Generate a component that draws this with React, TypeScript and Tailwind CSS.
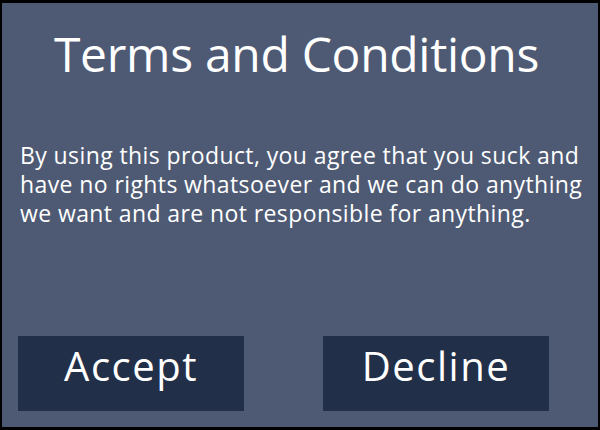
export default function App() {
  return (
    <div
      className="w-[600px] h-[430px] bg-[#4e5a73] border-t-[3px] border-b-[3px] border-x-2 border-black flex flex-col text-white"
      style={{ fontFamily: '"Open Sans", "Noto Sans", sans-serif' }}
    >
      <h1 className="pt-[26px] pr-[7px] text-center text-[48px] leading-[50px] tracking-[-0.3px] font-normal">
        Terms and Conditions
      </h1>
      <p className="mt-[62px] pl-[18px] pr-[4px] text-[23px] leading-[29px] tracking-[0.4px]">
        By using this product, you agree that you suck and have no rights
        whatsoever and we can do anything we want and are not responsible for
        anything.
      </p>
      <div className="mt-auto mb-[16px] pl-[16px] flex gap-[79px]">
        <button className="w-[226px] h-[75px] bg-[#222f49] flex items-center justify-center pb-[16px] text-[40px] tracking-[1.5px]">
          Accept
        </button>
        <button className="w-[226px] h-[75px] bg-[#222f49] flex items-center justify-center pb-[16px] text-[40px] tracking-[1.5px]">
          Decline
        </button>
      </div>
    </div>
  );
}
